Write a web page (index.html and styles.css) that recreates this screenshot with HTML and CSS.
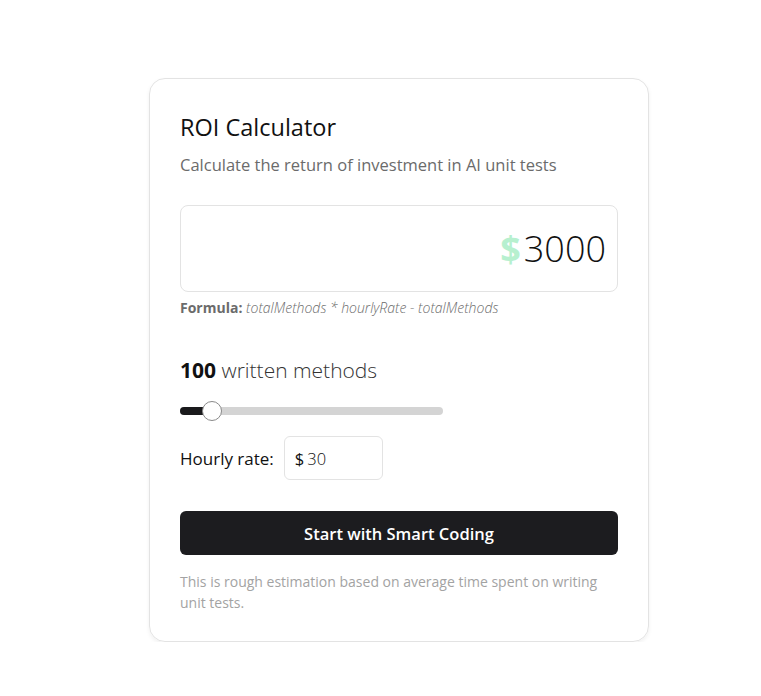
FILE: index.html
```html
<!DOCTYPE html>
<html>
<head>
<meta charset="utf-8">
<link rel="stylesheet" href="styles.css">
</head>
<body>
<div class="card">
  <h1 class="title">ROI Calculator</h1>
  <p class="subtitle">Calculate the return of investment in AI unit tests</p>
  <div class="result">
    <span class="cur">$</span><span class="amount">3000</span>
  </div>
  <p class="formula"><b>Formula:</b> <i>totalMethods * hourlyRate - totalMethods</i></p>
  <div class="methods"><b>100</b> written methods</div>
  <div class="slider">
    <div class="fill" style="width:32px"></div>
    <div class="thumb" style="left:22px"></div>
  </div>
  <div class="rate">
    <span class="rate-label">Hourly rate:</span>
    <div class="rate-input"><span>$</span>30</div>
  </div>
  <button class="cta">Start with Smart Coding</button>
  <p class="note">This is rough estimation based on average time spent on writing unit tests.</p>
</div>
</body>
</html>
```
FILE: styles.css
```css
* { box-sizing: border-box; }
body {
  margin: 0;
  background: #fff;
  font-family: "Open Sans", "Noto Sans", sans-serif;
  color: #111;
}
.card {
  width: 500px;
  margin: 78px 0 0 149px;
  padding: 30px 30px 26px;
  border: 1px solid #e3e3e3;
  border-radius: 16px;
  box-shadow: 0 2px 4px rgba(0,0,0,0.06);
  display: flex;
  flex-direction: column;
}
.title {
  margin: 2px 0 0;
  font-size: 23.5px;
  font-weight: 400;
  line-height: 32px;
  color: #111;
}
.subtitle {
  margin: 10px 0 0;
  font-size: 16.5px;
  line-height: 24px;
  color: #6b6b6b;
}
.result {
  margin-top: 28px;
  height: 87px;
  border: 1px solid #e3e3e3;
  border-radius: 8px;
  display: flex;
  justify-content: flex-end;
  align-items: center;
  padding-right: 11px;
  gap: 3px;
}
.cur {
  font-size: 36px;
  font-weight: 700;
  color: #b7f0cf;
  line-height: 1;
}
.amount {
  font-size: 36px;
  font-weight: 300;
  color: #111;
  line-height: 1;
}
.formula {
  margin: 6px 0 0;
  font-size: 14px;
  line-height: 20px;
  color: #6b6b6b;
}
.formula b { font-weight: 700; }
.formula i { font-weight: 300; }
.methods {
  margin-top: 38px;
  font-size: 21px;
  line-height: 28px;
  font-weight: 300;
  color: #333;
}
.methods b { font-weight: 700; color: #111; }
.slider {
  position: relative;
  margin-top: 23px;
  width: 263px;
  height: 8px;
  border-radius: 4px;
  background: #d4d4d4;
}
.fill {
  height: 8px;
  border-radius: 4px;
  background: #1a1a1c;
}
.thumb {
  position: absolute;
  top: -6px;
  width: 20px;
  height: 20px;
  border-radius: 50%;
  background: #fff;
  border: 1px solid #8a8a8a;
}
.rate {
  margin-top: 21px;
  display: flex;
  align-items: center;
  gap: 10px;
}
.rate-label {
  font-size: 17px;
  color: #111;
}
.rate-input {
  width: 99px;
  height: 44px;
  border: 1px solid #e3e3e3;
  border-radius: 6px;
  display: flex;
  align-items: center;
  padding-left: 10px;
  font-size: 16.5px;
  font-weight: 300;
  color: #111;
}
.rate-input span { margin-right: 3px; font-weight: 400; }
.cta {
  margin-top: 31px;
  height: 44px;
  border: none;
  border-radius: 6px;
  background: #1c1c1f;
  color: #fff;
  font-family: inherit;
  font-size: 16.5px;
  font-weight: 600;
}
.note {
  margin: 16px 0 0;
  font-size: 14px;
  line-height: 21px;
  color: #a3a3a3;
  padding-bottom: 2px;
}
```
